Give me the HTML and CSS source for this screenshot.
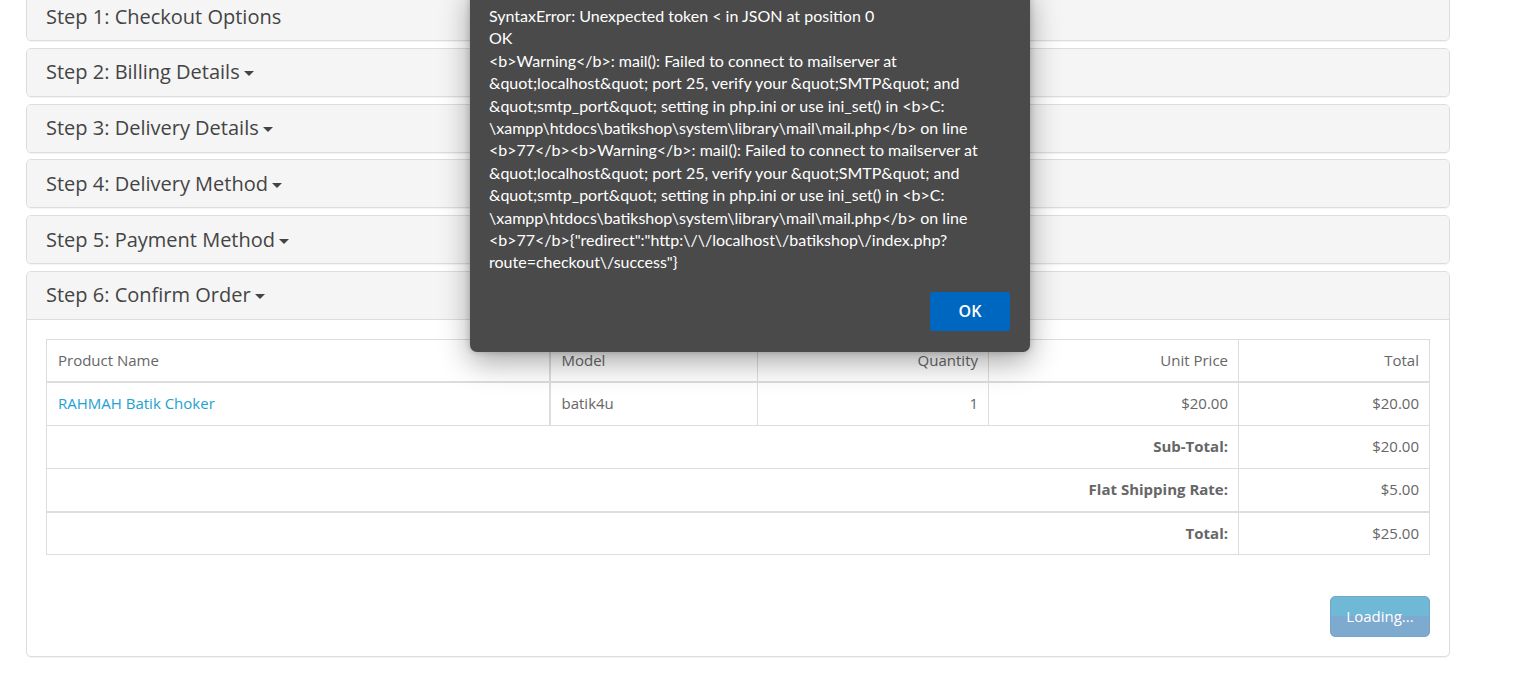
FILE: index.html
```
<!DOCTYPE html>
<html lang="en">
<head>
  <meta charset="UTF-8" />
  <title>Checkout</title>
  <link rel="stylesheet" href="styles.css">
</head>
<body>

  <div class="checkout">
    <div class="panel">
      <div class="panel-heading">Step 1: Checkout Options</div>
    </div>
    <div class="panel">
      <div class="panel-heading">Step 2: Billing Details <span class="caret"></span></div>
    </div>
    <div class="panel">
      <div class="panel-heading">Step 3: Delivery Details <span class="caret"></span></div>
    </div>
    <div class="panel">
      <div class="panel-heading">Step 4: Delivery Method <span class="caret"></span></div>
    </div>
    <div class="panel">
      <div class="panel-heading">Step 5: Payment Method <span class="caret"></span></div>
    </div>
    <div class="panel">
      <div class="panel-heading open">Step 6: Confirm Order <span class="caret"></span></div>
      <div class="panel-body">
        <table class="order">
          <colgroup>
            <col class="c-name">
            <col class="c-model">
            <col class="c-qty">
            <col class="c-price">
            <col class="c-total">
          </colgroup>
          <thead>
            <tr>
              <th>Product Name</th>
              <th class="sep">Model</th>
              <th class="right">Quantity</th>
              <th class="right">Unit Price</th>
              <th class="right">Total</th>
            </tr>
          </thead>
          <tbody>
            <tr>
              <td><a href="#">RAHMAH Batik Choker</a></td>
              <td class="sep">batik4u</td>
              <td class="right">1</td>
              <td class="right">$20.00</td>
              <td class="right">$20.00</td>
            </tr>
          </tbody>
          <tfoot>
            <tr>
              <td colspan="4" class="right"><strong>Sub-Total:</strong></td>
              <td class="right">$20.00</td>
            </tr>
            <tr>
              <td colspan="4" class="right"><strong>Flat Shipping Rate:</strong></td>
              <td class="right">$5.00</td>
            </tr>
            <tr class="grand">
              <td colspan="4" class="right"><strong>Total:</strong></td>
              <td class="right">$25.00</td>
            </tr>
          </tfoot>
        </table>
        <div class="buttons">
          <button class="btn btn-loading" disabled>Loading...</button>
        </div>
      </div>
    </div>
  </div>

  <div class="alert-box">
    <p class="alert-text">SyntaxError: Unexpected token &lt; in JSON at position 0<br>OK<br>&lt;b&gt;Warning&lt;/b&gt;: mail(): Failed to connect to mailserver at<br>&amp;quot;localhost&amp;quot; port 25, verify your &amp;quot;SMTP&amp;quot; and<br>&amp;quot;smtp_port&amp;quot; setting in php.ini or use ini_set() in &lt;b&gt;C:<br>\xampp\htdocs\batikshop\system\library\mail\mail.php&lt;/b&gt; on line<br>&lt;b&gt;77&lt;/b&gt;&lt;b&gt;Warning&lt;/b&gt;: mail(): Failed to connect to mailserver at<br>&amp;quot;localhost&amp;quot; port 25, verify your &amp;quot;SMTP&amp;quot; and<br>&amp;quot;smtp_port&amp;quot; setting in php.ini or use ini_set() in &lt;b&gt;C:<br>\xampp\htdocs\batikshop\system\library\mail\mail.php&lt;/b&gt; on line<br>&lt;b&gt;77&lt;/b&gt;{"redirect":"http:\/\/localhost\/batikshop\/index.php?<br>route=checkout\/success"}</p>
    <div class="alert-actions">
      <button class="alert-ok">OK</button>
    </div>
  </div>

</body>
</html>
```

FILE: styles.css
```
body {
  margin: 0;
  font-family: "Open Sans", "Liberation Sans", sans-serif;
  color: #666;
  background: #fff;
}
.checkout {
  width: 1424px;
  margin: -8px 0 0 26px;
}
.panel {
  border: 1px solid #ddd;
  border-radius: 5px;
  background: #fff;
  box-shadow: 0 1px 1px rgba(0,0,0,.05);
  margin-bottom: 6.75px;
  overflow: hidden;
}
.panel-heading {
  background: #f5f5f5;
  color: #444;
  font-size: 20px;
  line-height: 22px;
  padding: 12.5px 19px;
}
.panel-heading.open {
  border-bottom: 1px solid #ddd;
}
.caret {
  display: inline-block;
  width: 0;
  height: 0;
  margin-left: -1px;
  vertical-align: middle;
  border-top: 5px solid #444;
  border-left: 5px solid transparent;
  border-right: 5px solid transparent;
}
.panel-body {
  padding: 19px;
}
.order {
  width: 100%;
  border-collapse: collapse;
  border: 1px solid #ddd;
  font-size: 15px;
  table-layout: fixed;
}
.c-name  { width: 503px; }
.c-model { width: 208px; }
.c-qty   { width: 231px; }
.c-price { width: 250px; }
.order th,
.order td {
  border: 1px solid #ddd;
  padding: 10px 10px 10px 11px;
  line-height: 21.7px;
  text-align: left;
  font-weight: normal;
  white-space: nowrap;
}
.order thead th {
  border-bottom: 2.5px solid #ddd;
}
.order .sep {
  border-left: 2px solid #ddd;
}
.order .right {
  text-align: right;
}
.order tr.grand td {
  border-top: 2px solid #ddd;
}
.order a {
  color: #23a1d1;
  text-decoration: none;
}
.order strong {
  font-weight: bold;
}
.buttons {
  display: flex;
  justify-content: flex-end;
  margin-top: 41px;
}
.btn {
  font-family: inherit;
  font-size: 15px;
  line-height: 21px;
  padding: 9px 15px;
  border-radius: 5px;
  color: #fff;
}
.btn-loading {
  width: 100px;
  border: 1px solid #72a7c9;
  background: linear-gradient(to bottom, #6fb9d6 0%, #6fb9d6 50%, #7eaacf 50%, #7eaacf 100%);
}

/* alert dialog */
.alert-box {
  position: absolute;
  left: 470px;
  top: -15px;
  width: 560px;
  box-sizing: border-box;
  padding: 20px 20px 21px 19px;
  background: #4a4a4a;
  border-radius: 7px;
  box-shadow: 0 10px 30px rgba(0,0,0,.35), 0 0 6px rgba(0,0,0,.2);
  color: #fff;
  font-family: "Lato", "Noto Sans", sans-serif;
}
.alert-text {
  margin: 0;
  font-size: 16px;
  line-height: 22.4px;
  white-space: nowrap;
}
.alert-actions {
  display: flex;
  justify-content: flex-end;
  margin-top: 18px;
}
.alert-ok {
  width: 80px;
  height: 39px;
  border: none;
  border-radius: 3px;
  background: #0067c0;
  color: #fff;
  font-family: "Open Sans", "Noto Sans", sans-serif;
  font-size: 16px;
  font-weight: 600;
}
```
